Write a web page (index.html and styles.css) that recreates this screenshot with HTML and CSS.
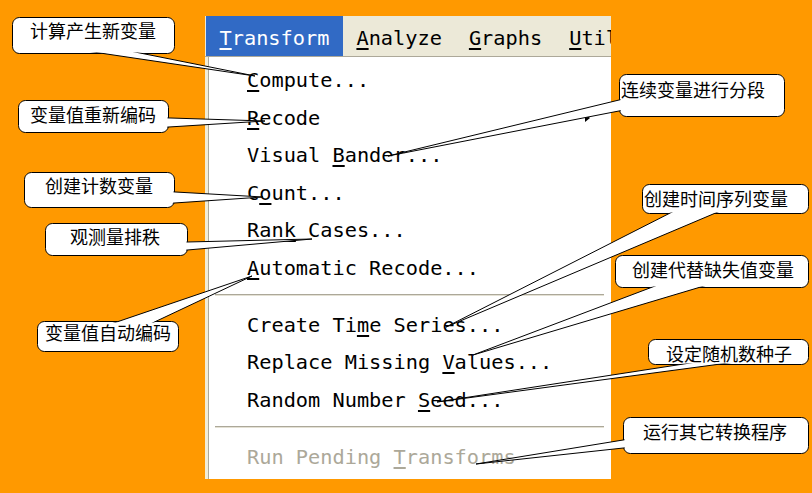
FILE: index.html
```html
<!DOCTYPE html>
<html lang="zh-CN">
<head>
<meta charset="utf-8">
<title>Transform 菜单说明</title>
<link rel="stylesheet" href="styles.css">
</head>
<body>
<div class="window">
  <div class="menubar">
    <span class="menu active"><u>T</u>ransform</span>
    <span class="menu"><u>A</u>nalyze</span>
    <span class="menu"><u>G</u>raphs</span>
    <span class="menu"><u>U</u>til</span>
  </div>
  <div class="dropdown">
    <div class="item"><span class="txt"><u>C</u>ompute...</span></div>
    <div class="item"><span class="txt"><u>R</u>ecode</span><span class="submenu"></span></div>
    <div class="item"><span class="txt">Visual <u>B</u>ander...</span></div>
    <div class="item"><span class="txt">C<u>o</u>unt...</span></div>
    <div class="item"><span class="txt">Ran<u>k</u> Cases...</span></div>
    <div class="item"><span class="txt"><u>A</u>utomatic Recode...</span></div>
    <div class="sep"></div>
    <div class="item"><span class="txt">Create Ti<u>m</u>e Series...</span></div>
    <div class="item"><span class="txt">Replace Missing <u>V</u>alues...</span></div>
    <div class="item"><span class="txt">Random Number <u>S</u>eed...</span></div>
    <div class="sep"></div>
    <div class="item disabled"><span class="txt">Run Pending <u>T</u>ransforms</span></div>
  </div>
</div>

<svg class="tails" viewBox="0 0 812 493" width="812" height="493">
  <g>
    <rect class="box" x="12.5" y="17.5" width="162" height="36" rx="7"/>
    <polygon class="tail" points="255,76 73,49 120,49"/>
    <rect class="inner" x="13.5" y="18.5" width="160" height="34" rx="6"/>
  </g>
  <g>
    <rect class="box" x="18.5" y="100.5" width="150" height="32" rx="7"/>
    <polygon class="tail" points="265,121 164,117.8 164,127.3"/>
    <rect class="inner" x="19.5" y="101.5" width="148" height="30" rx="6"/>
  </g>
  <g>
    <rect class="box" x="24.5" y="172.5" width="150" height="35" rx="7"/>
    <polygon class="tail" points="263,197 170,191.7 170,203.3"/>
    <rect class="inner" x="25.5" y="173.5" width="148" height="33" rx="6"/>
  </g>
  <g>
    <rect class="box" x="45.5" y="223.5" width="142" height="32" rx="7"/>
    <polygon class="tail" points="312,239 183,242.1 183,250.4"/>
    <rect class="inner" x="46.5" y="224.5" width="140" height="30" rx="6"/>
  </g>
  <g>
    <rect class="box" x="37.5" y="321.5" width="141" height="30" rx="7"/>
    <polygon class="tail" points="252,276 105,326 146,326"/>
    <rect class="inner" x="38.5" y="322.5" width="139" height="28" rx="6"/>
  </g>
  <g>
    <rect class="box" x="619.5" y="74.5" width="165" height="42" rx="7"/>
    <polygon class="tail" points="388,156 624,98.8 624,110"/>
    <rect class="inner" x="620.5" y="75.5" width="163" height="40" rx="6"/>
  </g>
  <g>
    <rect class="box" x="642.5" y="184.5" width="166" height="29" rx="7"/>
    <polygon class="tail" points="446,327 678,209 725,209"/>
    <rect class="inner" x="643.5" y="185.5" width="164" height="27" rx="6"/>
  </g>
  <g>
    <rect class="box" x="615.5" y="255.5" width="193" height="32" rx="7"/>
    <polygon class="tail" points="473,355 663,283 714,283"/>
    <rect class="inner" x="616.5" y="256.5" width="191" height="30" rx="6"/>
  </g>
  <g>
    <rect class="box" x="648.5" y="339.5" width="160" height="25" rx="7"/>
    <polygon class="tail" points="437,402 703,361 743,361"/>
    <rect class="inner" x="649.5" y="340.5" width="158" height="23" rx="6"/>
  </g>
  <g>
    <rect class="box" x="623.5" y="417.5" width="185" height="36" rx="7"/>
    <polygon class="tail" points="476,464 628,439.2 628,447.5"/>
    <rect class="inner" x="624.5" y="418.5" width="183" height="34" rx="6"/>
  </g>
</svg>

<div class="label l1">计算产生新变量</div>
<div class="label l2">变量值重新编码</div>
<div class="label l3">创建计数变量</div>
<div class="label l4">观测量排秩</div>
<div class="label l5">变量值自动编码</div>
<div class="label l6">连续变量进行分段</div>
<div class="label l7">创建时间序列变量</div>
<div class="label l8">创建代替缺失值变量</div>
<div class="label l9">设定随机数种子</div>
<div class="label l10">运行其它转换程序</div>
</body>
</html>
```

FILE: styles.css
```css
html, body {
  margin: 0;
}

body {
  position: relative;
  width: 812px;
  height: 493px;
  box-sizing: border-box;
  padding: 16px 0 0 205px;
  overflow: hidden;
  background: #FF9900;
  font-family: "DejaVu Sans Mono", "Liberation Mono", monospace;
  color: #000;
}

.window {
  width: 406px;
  height: 463px;
  overflow: hidden;
  display: flex;
  flex-direction: column;
}

.menubar {
  display: flex;
  flex-shrink: 0;
  height: 40px;
  padding-left: 1px;
  background: #ECE9D8;
  border-bottom: 1px solid #ACA899;
  font-size: 20.3px;
}

.menu {
  flex-shrink: 0;
  padding: 4px 13.5px 0;
  line-height: 36px;
  white-space: nowrap;
}

.menu.active {
  background: #316AC5;
  color: #fff;
}

.dropdown {
  flex: 1;
  background: #fff;
  border-left: 3px solid #F1EDD8;
  box-shadow: inset 1px 0 0 #ACA899;
  padding: 5px 0 2px;
  font-size: 20.3px;
}

.item {
  display: flex;
  align-items: center;
  height: 37.5px;
  line-height: 37.5px;
  padding-left: 39px;
}

.txt {
  white-space: pre;
}

u {
  text-decoration: underline;
  text-decoration-thickness: 1.5px;
  text-underline-offset: 3px;
}

.disabled {
  color: #ACA899;
}

.submenu {
  margin-left: auto;
  margin-right: 21px;
  width: 0;
  height: 0;
  border-left: 5px solid #000;
  border-top: 4.5px solid transparent;
  border-bottom: 4.5px solid transparent;
}

.sep {
  height: 2px;
  margin: 7px 7px 10.5px;
  background: linear-gradient(#ACA899 50%, #E4E1D4 50%);
}

/* annotation overlay */
.tails {
  position: absolute;
  left: 0;
  top: 0;
  width: 812px;
  height: 493px;
  pointer-events: none;
}

.box {
  fill: #fff;
  stroke: #000;
  stroke-width: 1;
}

.tail {
  fill: #fff;
  stroke: #000;
  stroke-width: 1;
  stroke-linejoin: miter;
}

.inner {
  fill: #fff;
}

.label {
  position: absolute;
  font-family: "Noto Sans CJK SC", sans-serif;
  font-size: 18px;
  line-height: 18px;
  white-space: nowrap;
  color: #000;
}

.l1 { left: 30px; top: 21px; }
.l2 { left: 30px; top: 105px; }
.l3 { left: 45px; top: 176px; }
.l4 { left: 70px; top: 227px; }
.l5 { left: 45px; top: 323px; }
.l6 { left: 621px; top: 79.5px; }
.l7 { left: 644px; top: 189px; }
.l8 { left: 632px; top: 260px; }
.l9 { left: 666px; top: 343.5px; }
.l10 { left: 643px; top: 421.5px; }
```
